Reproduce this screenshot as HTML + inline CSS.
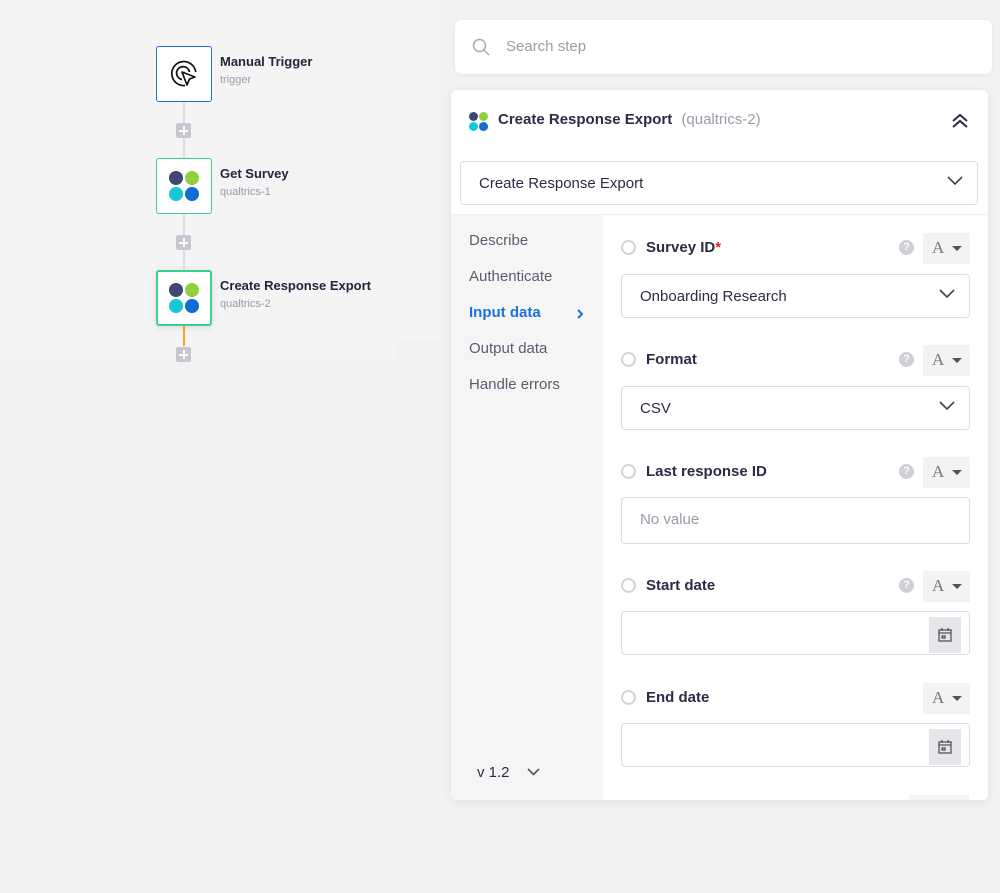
<!DOCTYPE html>
<html><head><style>
*{box-sizing:border-box;margin:0;padding:0}
body{width:1000px;height:893px;background:#f2f2f2;font-family:"Liberation Sans",sans-serif;position:relative;overflow:hidden;color:#2a2d45}
.abs{position:absolute}
.node{position:absolute;left:156px;width:56px;height:56px;background:#fff;border:1px solid #3ecf8e;border-radius:3px;display:flex;align-items:center;justify-content:center}
.nt{position:absolute;left:220px;font-size:13px;font-weight:bold;color:#22253d}
.ns{position:absolute;left:220px;font-size:11px;color:#9a9ca8}
.plus{position:absolute;left:176px;width:15px;height:15px;background:#c6c7cf;border-radius:2px}
.plus:before{content:"";position:absolute;left:3px;top:6.5px;width:9px;height:2px;background:#fff}
.plus:after{content:"";position:absolute;left:6.5px;top:3px;width:2px;height:9px;background:#fff}
.vl{position:absolute;left:183px;width:2px;background:#dcdde2}
.dots{display:grid;grid-template-columns:14px 14px;gap:2px}
.dots i{width:14px;height:14px;border-radius:50%;display:block}
.side{position:absolute;left:469px;font-size:15px;color:#5b5d6e}
.lbl{position:absolute;left:621px;font-size:15px;font-weight:bold;color:#2a2d45;display:flex;align-items:center}
.lbl .r{width:15px;height:15px;border:2px solid #d2d3da;border-radius:50%;margin-right:10px}
.abtn{position:absolute;left:923px;width:47px;height:31px;background:#f3f3f4;font-family:"Liberation Serif",serif;font-size:17px;color:#777;padding:5px 0 0 9px}
.abtn:after{content:"";position:absolute;left:29px;top:13px;border:5px solid transparent;border-top:5px solid #555;border-bottom:0}
.q{position:absolute;left:899px;width:15px;height:15px;border-radius:50%;background:#cfd0d6;color:#fff;font-size:11px;font-weight:bold;text-align:center;line-height:15px}
.inp{position:absolute;left:621px;width:349px;height:44px;border:1px solid #dcdde2;border-radius:4px;background:#fff;font-size:15px;color:#2a2d45;padding:13px 18px}
.chev{position:absolute;right:14px;top:14px}
.cal{position:absolute;right:8px;top:5px;width:32px;height:36px;background:#e6e6ea;display:flex;align-items:center;justify-content:center}
</style></head><body>
<div class="abs" style="left:0;top:0;width:440px;height:340px;background:#f4f4f4"></div>
<div class="abs" style="left:0;top:340px;width:396px;height:22px;background:#f4f4f4"></div>

<div class="vl" style="top:102px;height:56px"></div>
<div class="vl" style="top:214px;height:56px"></div>
<div class="abs" style="left:183px;top:326px;width:2px;height:20px;background:#f5a623"></div>

<div class="node" style="top:46px;border-color:#1f6fd6">
<svg width="36" height="36" viewBox="0 0 36 36" fill="none" stroke="#111" stroke-width="1.7"><path d="M19 29.5A12 12 0 1 1 29.7 16"/><path d="M16 23.5A6.5 6.5 0 1 1 23.5 16"/><path d="M16 16l13 5-5.5 2-2.5 6z" fill="#fff" stroke-linejoin="round"/></svg></div>
<div class="nt" style="top:54px">Manual Trigger</div><div class="ns" style="top:74px">trigger</div>
<div class="plus" style="top:123px"></div>

<div class="node" style="top:158px"><div class="dots"><i style="background:#3d4677"></i><i style="background:#8fd03c"></i><i style="background:#16c7d5"></i><i style="background:#0f6fcf"></i></div></div>
<div class="nt" style="top:166px">Get Survey</div><div class="ns" style="top:186px">qualtrics-1</div>
<div class="plus" style="top:235px"></div>

<div class="node" style="top:270px;border:2px solid #3ecf8e;box-shadow:0 2px 8px rgba(0,0,0,.1)"><div class="dots"><i style="background:#3d4677"></i><i style="background:#8fd03c"></i><i style="background:#16c7d5"></i><i style="background:#0f6fcf"></i></div></div>
<div class="nt" style="top:278px">Create Response Export</div><div class="ns" style="top:298px">qualtrics-2</div>
<div class="plus" style="top:347px"></div>

<div class="abs" style="left:455px;top:20px;width:537px;height:54px;background:#fff;border-radius:6px;box-shadow:0 1px 4px rgba(0,0,0,.06)">
<svg class="abs" style="left:17px;top:18px" width="18" height="18" viewBox="0 0 18 18" fill="none" stroke="#a8aab4" stroke-width="1.5"><circle cx="7.5" cy="7.5" r="6"/><path d="M12 12l5 5"/></svg>
<div class="abs" style="left:51px;top:18px;font-size:15px;color:#9a9ca8">Search step</div></div>

<div class="abs" style="left:451px;top:90px;width:537px;height:710px;background:#fff;border-radius:6px;box-shadow:0 2px 10px rgba(0,0,0,.07);overflow:hidden">
<div class="abs" style="left:0;top:125px;width:152px;height:600px;background:#f5f5f5"></div>
<div class="abs" style="left:0;top:124px;width:537px;height:1px;background:#eee"></div>
<div class="abs" style="left:18px;top:22px"><div class="dots" style="grid-template-columns:9px 9px;gap:1px"><i style="width:9px;height:9px;background:#3d4677"></i><i style="width:9px;height:9px;background:#8fd03c"></i><i style="width:9px;height:9px;background:#16c7d5"></i><i style="width:9px;height:9px;background:#0f6fcf"></i></div></div>
<div class="abs" style="left:47px;top:21px;font-size:15px;font-weight:bold;color:#2a2d45">Create Response Export <span style="font-weight:normal;color:#9a9ca8;margin-left:5px">(qualtrics-2)</span></div>
<svg class="abs" style="left:500px;top:23px" width="18" height="16" viewBox="0 0 18 16" fill="none" stroke="#2a2d45" stroke-width="2"><path d="M2 8l7-6 7 6M2 14l7-6 7 6"/></svg>
<div class="abs" style="left:9px;top:71px;width:518px;height:44px;border:1px solid #dcdde2;border-radius:4px;font-size:15px;padding:13px 18px">Create Response Export
<svg class="chev" width="16" height="10" viewBox="0 0 16 10" fill="none" stroke="#444" stroke-width="1.6"><path d="M1 1l7 7 7-7"/></svg></div>
</div>

<div class="side" style="top:232px">Describe</div>
<div class="side" style="top:268px">Authenticate</div>
<div class="side" style="top:304px;color:#1b72d8;font-weight:bold">Input data</div>
<svg class="abs" style="left:577px;top:309px" width="7" height="10" viewBox="0 0 7 10" fill="none" stroke="#1b72d8" stroke-width="2"><path d="M1 1l4 4-4 4"/></svg>
<div class="side" style="top:340px">Output data</div>
<div class="side" style="top:376px">Handle errors</div>
<div class="side" style="top:764px;left:477px;color:#2a2d45">v 1.2</div>
<svg class="abs" style="left:527px;top:768px" width="13" height="8" viewBox="0 0 13 8" fill="none" stroke="#555" stroke-width="1.6"><path d="M1 1l5.5 5.5L12 1"/></svg>

<div class="lbl" style="top:239px"><span class="r"></span>Survey ID<span style="color:#e02020">*</span></div>
<div class="q" style="top:240px">?</div><div class="abtn" style="top:233px">A</div>
<div class="inp" style="top:274px">Onboarding Research<svg class="chev" width="16" height="10" viewBox="0 0 16 10" fill="none" stroke="#444" stroke-width="1.6"><path d="M1 1l7 7 7-7"/></svg></div>

<div class="lbl" style="top:351px"><span class="r"></span>Format</div>
<div class="q" style="top:352px">?</div><div class="abtn" style="top:345px">A</div>
<div class="inp" style="top:386px">CSV<svg class="chev" width="16" height="10" viewBox="0 0 16 10" fill="none" stroke="#444" stroke-width="1.6"><path d="M1 1l7 7 7-7"/></svg></div>

<div class="lbl" style="top:463px"><span class="r"></span>Last response ID</div>
<div class="q" style="top:464px">?</div><div class="abtn" style="top:457px">A</div>
<div class="inp" style="top:497px;height:47px;color:#9a9ca8">No value</div>

<div class="lbl" style="top:577px"><span class="r"></span>Start date</div>
<div class="q" style="top:578px">?</div><div class="abtn" style="top:571px">A</div>
<div class="inp" style="top:611px"><div class="cal"><svg width="16" height="16" viewBox="0 0 16 16" fill="none" stroke="#555" stroke-width="1.3"><rect x="2" y="3" width="12" height="11"/><path d="M2 6h12M5 1v3M11 1v3"/><rect x="5" y="9" width="3" height="2"/></svg></div></div>

<div class="lbl" style="top:689px"><span class="r"></span>End date</div>
<div class="abtn" style="top:683px">A</div>
<div class="inp" style="top:723px"><div class="cal"><svg width="16" height="16" viewBox="0 0 16 16" fill="none" stroke="#555" stroke-width="1.3"><rect x="2" y="3" width="12" height="11"/><path d="M2 6h12M5 1v3M11 1v3"/><rect x="5" y="9" width="3" height="2"/></svg></div></div>
<div class="abs" style="left:909px;top:795px;width:60px;height:5px;background:#f3f3f4"></div>
</body></html>
